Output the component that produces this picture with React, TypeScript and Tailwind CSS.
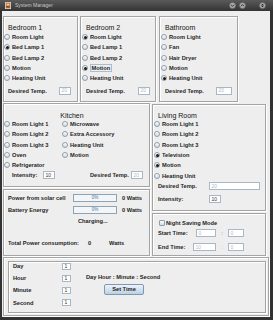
import React from "react";

function Radio({ label, checked = false, focus = false }: { label: string; checked?: boolean; focus?: boolean }) {
  return (
    <div className="flex items-center gap-[2px] h-[10.3px]">
      <span className="w-[6px] h-[6px] shrink-0 rounded-full border border-[#8e9cab] bg-linear-to-b from-white to-[#d3dbe5] flex items-center justify-center">
        {checked && <span className="w-[3px] h-[3px] rounded-full bg-[#1a1a1a]" />}
      </span>
      <span className={focus ? "border border-[#a9bdd3] px-[0.5px] leading-[6px]" : "leading-[6px]"}>{label}</span>
    </div>
  );
}

function Field({ className, text, dim = false }: { className: string; text: string; dim?: boolean }) {
  return (
    <div
      className={`${className} shrink-0 border border-[#a9b6c4] bg-white flex items-center pl-[1.5px] text-[5px] font-normal leading-none ${
        dim ? "text-[#b0bacb]" : "text-[#333333]"
      }`}
    >
      {text}
    </div>
  );
}

function Panel({ className, children }: { className: string; children?: React.ReactNode }) {
  return (
    <div className={`shrink-0 border border-[#a4a4a4] shadow-[inset_1px_1px_0_#ffffff,1px_1px_0_#ffffff] ${className}`}>
      {children}
    </div>
  );
}

function Title({ children, className = "" }: { children: React.ReactNode; className?: string }) {
  return <div className={`text-[7px] font-normal text-[#151515] leading-none flex items-center ${className}`}>{children}</div>;
}

function Bar() {
  return (
    <div className="w-[44px] h-[8px] shrink-0 border border-[#8fa2b6] bg-[#f3f5f8] flex items-center justify-center text-[4.5px] font-normal text-[#4f74a8]">
      0%
    </div>
  );
}

function WinBtn({ kind }: { kind: "down" | "up" | "max" }) {
  return (
    <svg width="7" height="7" viewBox="0 0 7 7">
      <circle cx="3.5" cy="3.5" r="3.1" fill="#a8a8a8" stroke="#5c5c5c" strokeWidth="0.5" />
      {kind === "down" && <path d="M2 2.8 L3.5 4.4 L5 2.8" stroke="#2a2a2a" strokeWidth="0.9" fill="none" />}
      {kind === "up" && <path d="M2 4.2 L3.5 2.6 L5 4.2" stroke="#2a2a2a" strokeWidth="0.9" fill="none" />}
      {kind === "max" && (
        <>
          <path d="M2 3.2 L3.5 1.8 L5 3.2 Z" fill="#2a2a2a" />
          <path d="M2 3.8 L3.5 5.2 L5 3.8 Z" fill="#2a2a2a" />
        </>
      )}
    </svg>
  );
}

export default function App() {
  return (
    <div className="w-[273px] h-[320px] bg-[#333333] flex flex-col overflow-hidden font-['Liberation_Sans',Arial,sans-serif] text-[#1e1e1e]">
      {/* Title bar */}
      <div className="h-[11px] shrink-0 bg-linear-to-b from-[#5a5a5a] to-[#343434] flex items-center">
        <svg className="ml-[5px]" width="6" height="7" viewBox="0 0 6 7">
          <rect x="0" y="0" width="6" height="7" fill="#d9d2c4" />
          <rect x="0.8" y="0.8" width="4.4" height="5.4" fill="#c0643a" />
          <rect x="1.6" y="1.6" width="2.8" height="2" fill="#f0d38a" />
          <rect x="1.6" y="4" width="2.8" height="1.4" fill="#7a4a2a" />
        </svg>
        <span className="ml-[4px] text-[5px] text-[#c6c6c6] leading-none">System Manager</span>
        <div className="ml-auto mr-[7px] flex items-center">
          <WinBtn kind="down" />
          <span className="w-[3px]" />
          <WinBtn kind="up" />
          <span className="w-[13px]" />
          <WinBtn kind="max" />
        </div>
      </div>

      {/* Content */}
      <div className="ml-[2px] mr-[3px] mb-[3px] flex-1 bg-[#eeeeee] pl-[1px] pt-[5px] flex flex-col text-[5.7px] font-bold">
        {/* Row 1 */}
        <div className="flex items-start">
          <Panel className="w-[75px] h-[86px] pt-[5px] flex flex-col">
            <Title className="h-[10px] pl-[4px]">Bedroom 1</Title>
            <div className="flex flex-col">
              <Radio label="Room Light" />
              <Radio label="Bed Lamp 1" checked />
              <Radio label="Bed Lamp 2" />
              <Radio label="Motion" />
              <Radio label="Heating Unit" />
            </div>
            <div className="flex items-center h-[10px] mt-[2.5px] pl-[4px]">
              <span className="w-[51px]">Desired Temp.</span>
              <Field className="w-[12px] h-[8px]" text="20" dim />
            </div>
          </Panel>
          <Panel className="ml-[2px] w-[76px] h-[86px] pt-[5px] flex flex-col">
            <Title className="h-[10px] pl-[5px]">Bedroom 2</Title>
            <div className="flex flex-col pl-[1px]">
              <Radio label="Room Light" checked />
              <Radio label="Bed Lamp 1" />
              <Radio label="Bed Lamp 2" />
              <Radio label="Motion" checked focus />
              <Radio label="Heating Unit" />
            </div>
            <div className="flex items-center h-[10px] mt-[2.5px] pl-[5px]">
              <span className="w-[52px]">Desired Temp.</span>
              <Field className="w-[12px] h-[8px]" text="20" dim />
            </div>
          </Panel>
          <Panel className="ml-[3px] w-[79px] h-[86px] pt-[5px] flex flex-col">
            <Title className="h-[10px] pl-[5px]">Bathroom</Title>
            <div className="flex flex-col pl-[1px]">
              <Radio label="Room Light" />
              <Radio label="Fan" />
              <Radio label="Hair Dryer" />
              <Radio label="Motion" />
              <Radio label="Heating Unit" checked />
            </div>
            <div className="flex items-center h-[10px] mt-[2.5px] pl-[5px]">
              <span className="w-[51px]">Desired Temp.</span>
              <Field className="w-[16px] h-[8px]" text="20" dim />
            </div>
          </Panel>
        </div>

        {/* Row 2 */}
        <div className="flex items-start mt-[1px]">
          {/* left column */}
          <div className="flex flex-col w-[147px]">
            <Panel className="w-[147px] h-[84px] pt-[7px] flex flex-col">
              <Title className="h-[8px] justify-center pr-[9px]">Kitchen</Title>
              <div className="flex">
                <div className="flex flex-col w-[58px]">
                  <Radio label="Room Light 1" />
                  <Radio label="Room Light 2" />
                  <Radio label="Room Light 3" />
                  <Radio label="Oven" />
                  <Radio label="Refrigerator" />
                </div>
                <div className="flex flex-col">
                  <Radio label="Microwave" />
                  <Radio label="Extra Accessory" />
                  <Radio label="Heating Unit" />
                  <Radio label="Motion" />
                </div>
              </div>
              <div className="flex items-center h-[10px] mt-[0px] pl-[8px]">
                <span className="w-[31px]">Intensity:</span>
                <Field className="w-[12px] h-[8px]" text="10" />
                <span className="ml-[35px] w-[41px]">Desired Temp.</span>
                <Field className="w-[12px] h-[8px]" text="20" dim />
              </div>
            </Panel>
            <Panel className="mt-[2px] w-[147px] h-[67px] pt-[4px] pl-[4px] flex flex-col">
              <div className="flex items-center h-[8px]">
                <span className="w-[65px]">Power from solar cell</span>
                <Bar />
                <span className="ml-[5px]">0 Watts</span>
              </div>
              <div className="flex items-center h-[8px] mt-[4px]">
                <span className="w-[65px]">Battery Energy</span>
                <Bar />
                <span className="ml-[5px]">0 Watts</span>
              </div>
              <div className="flex items-center h-[8px] mt-[3px] pl-[70px]">Charging...</div>
              <div className="flex items-center h-[8px] mt-[14px]">
                <span className="w-[80px]">Total Power consumption:</span>
                <span className="w-[21px]">0</span>
                <span>Watts</span>
              </div>
            </Panel>
          </div>

          {/* right column */}
          <div className="flex flex-col ml-[2px] mt-[1px] w-[114px]">
            <Panel className="w-[114px] h-[107px] pt-[6px] flex flex-col">
              <Title className="h-[8px] pl-[5px]">Living Room</Title>
              <div className="flex flex-col pl-[1px]">
                <Radio label="Room Light 1" />
                <Radio label="Room Light 2" />
                <Radio label="Room Light 3" />
                <Radio label="Television" checked />
                <Radio label="Motion" checked />
                <Radio label="Heating Unit" />
              </div>
              <div className="flex items-center h-[10px] mt-[0.6px] pl-[5px]">
                <span className="w-[51px]">Desired Temp.</span>
                <Field className="w-[51px] h-[8px]" text="20" dim />
              </div>
              <div className="flex items-center h-[10px] mt-[3px] pl-[5px]">
                <span className="w-[51px]">Intensity:</span>
                <Field className="w-[12px] h-[8px]" text="10" />
              </div>
            </Panel>
            <Panel className="mt-[2px] w-[114px] h-[43px] pt-[4px] flex flex-col">
              <div className="flex items-center h-[10px] pl-[6px] gap-[1px]">
                <span className="w-[6px] h-[6px] border border-[#8e9cab] bg-linear-to-b from-white to-[#d3dbe5] rounded-[1px]" />
                <span>Night Saving Mode</span>
              </div>
              <div className="flex items-center h-[10px] pl-[5px]">
                <span className="w-[38px]">Start Time:</span>
                <Field className="w-[20px] h-[8px]" text="0" dim />
                <span className="w-[12px] text-center font-normal text-[#666666]">:</span>
                <Field className="w-[16px] h-[8px]" text="0" dim />
              </div>
              <div className="flex items-center h-[10px] mt-[4px] pl-[5px]">
                <span className="w-[35px]">End Time:</span>
                <Field className="w-[23px] h-[8px]" text="10" dim />
                <span className="w-[12px] text-center font-normal text-[#999999]">:</span>
                <Field className="w-[16px] h-[8px]" text="0" dim />
              </div>
            </Panel>
          </div>
        </div>

        {/* Row 3 */}
        <Panel className="mt-[1px] w-[266px] h-[59px] pl-[4px] pt-[3px]">
          <Panel className="w-[258px] h-[52px] flex">
            <div className="flex flex-col pl-[4px] pt-[0.5px] gap-[5.3px]">
              {["Day", "Hour", "Minute", "Second"].map((l) => (
                <div key={l} className="flex items-center h-[7px]">
                  <span className="w-[49px]">{l}</span>
                  <Field className="w-[9px] h-[7px]" text="1" />
                </div>
              ))}
            </div>
            <div className="flex flex-col ml-[15px]">
              <div className="h-[8px] mt-[11px] flex items-center">Day Hour : Minute : Second</div>
              <div className="mt-[3px] ml-[18px] w-[40px] h-[11px] border border-[#7f98b2] rounded-[2px] bg-linear-to-b from-[#eef3f9] to-[#bcd0e4] flex items-center justify-center">
                Set Time
              </div>
            </div>
          </Panel>
        </Panel>
      </div>
    </div>
  );
}
